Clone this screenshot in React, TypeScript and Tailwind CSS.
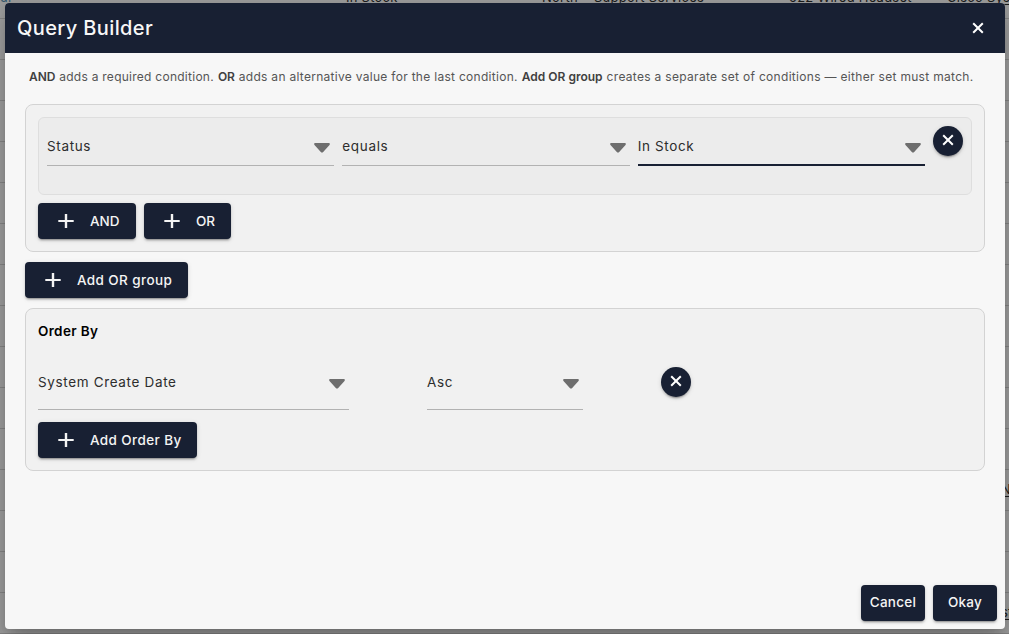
import React from 'react';
import clsx from 'clsx';

const CloseIcon: React.FC = () => (
  <svg width="12" height="12" viewBox="0 0 12 12" fill="none" stroke="currentColor" strokeWidth="2">
    <path d="M1.2 1.2L10.8 10.8M10.8 1.2L1.2 10.8" />
  </svg>
);

const PlusIcon: React.FC = () => (
  <svg width="16" height="14" viewBox="0 0 16 14" fill="currentColor" className="shrink-0">
    <path d="M6.8 0h2.4v6h6.5v2H9.2v6H6.8V8H.3V6h6.5z" />
  </svg>
);

const ArrowIcon: React.FC = () => (
  <svg width="16" height="10" viewBox="0 0 16 10" fill="#6e6e6e" className="shrink-0">
    <path d="M1.3 0h13.4c1.1 0 1.5 1.2.8 1.9L9.2 8.9c-.7.7-1.7.7-2.4 0L.5 1.9C-.2 1.2.2 0 1.3 0z" />
  </svg>
);

interface SelectFieldProps {
  value: string;
  active?: boolean;
  className?: string;
}

const SelectField: React.FC<SelectFieldProps> = ({ value, active, className }) => (
  <div
    className={clsx(
      'flex items-start justify-between pr-1',
      active ? 'border-b-2 border-[#182033]' : 'border-b border-[#b2b2b2]',
      className,
    )}
  >
    <span className="text-[13.5px] leading-[18px] tracking-[0.65px] text-[#2d2d2d]">{value}</span>
    <span className="pt-1.5">
      <ArrowIcon />
    </span>
  </div>
);

interface ActionButtonProps {
  label: string;
  icon?: boolean;
  className?: string;
}

const ActionButton: React.FC<ActionButtonProps> = ({ label, icon, className }) => (
  <button
    className={clsx(
      'flex h-9 items-center rounded bg-[#182033] text-[13.5px] font-medium whitespace-nowrap text-[#f4f4f4] shadow-[0_3px_1px_-2px_rgba(0,0,0,0.2),0_2px_2px_0_rgba(0,0,0,0.14),0_1px_5px_0_rgba(0,0,0,0.12)]',
      icon ? 'gap-4 pl-5' : 'justify-center pb-px',
      className,
    )}
  >
    {icon && <PlusIcon />}
    {label}
  </button>
);

const RemoveButton: React.FC = () => (
  <button className="flex size-[30px] shrink-0 items-center justify-center rounded-full bg-[#182033] pb-0.5 text-white shadow-[0_3px_1px_-2px_rgba(0,0,0,0.2),0_2px_2px_0_rgba(0,0,0,0.14),0_1px_5px_0_rgba(0,0,0,0.12)]">
    <CloseIcon />
  </button>
);

// Table rows sitting under the backdrop
const tableRows = [
  ['ur', 'In Stock', 'North', 'Support Services', '522 Wired Headset', 'Cisco Systems'],
  [], [], [], [], [], [], [], [], [], [], [],
  ['', '', '', '', '', 'N'],
  [], [],
  ['', '', '', '', '', 'st'],
];

const BackgroundTable: React.FC = () => (
  <div className="-mt-[22px]">
    {tableRows.map((row, i) => (
      <div
        key={i}
        className="grid h-[41px] grid-cols-[346px_196px_52px_195px_158px_62px] items-center border-b border-[#838383] text-[13px] tracking-[0.25px] whitespace-nowrap text-[#1c1c1c]"
      >
        {i === 0 && (
          <>
            <span className="text-[#33566b]">{row[0]}</span>
            <span>{row[1]}</span>
            <span>{row[2]}</span>
            <span>{row[3]}</span>
            <span>{row[4]}</span>
            <span className="underline underline-offset-2">{row[5]}</span>
          </>
        )}
        {i > 0 && row[5] && (
          <span className="col-start-6 pl-[54px] underline underline-offset-2">{row[5]}</span>
        )}
      </div>
    ))}
  </div>
);

export default function App() {
  return (
    <div className="relative h-[634px] w-[1009px] overflow-hidden bg-[#9b9b9b] font-['Inter',sans-serif]">
      <BackgroundTable />

      <div className="absolute top-[3px] left-[5px] flex h-[626px] w-[1000px] flex-col overflow-hidden rounded bg-[#f7f7f7] shadow-[0_11px_15px_-7px_rgba(0,0,0,0.2),0_24px_38px_3px_rgba(0,0,0,0.1),0_2px_8px_0_rgba(0,0,0,0.12)]">
        {/* Header */}
        <div className="flex h-[50px] shrink-0 items-center justify-between bg-[#182033] pr-[21px] pb-px pl-3 text-white">
          <h2 className="text-xl font-medium tracking-[0.38px] text-[#f7f7f7]">Query Builder</h2>
          <CloseIcon />
        </div>

        <div className="flex flex-1 flex-col px-5">
          <p className="flex h-[51px] items-center gap-1 pb-[3px] pl-1 text-xs whitespace-nowrap text-[#555555]">
            <b className="font-semibold tracking-[-0.1px] text-[#404040]">AND</b>
            <span className="tracking-[0.26px]">adds a required condition.</span>
            <b className="font-semibold tracking-[-0.1px] text-[#404040]">OR</b>
            <span className="tracking-[0.29px]">adds an alternative value for the last condition.</span>
            <b className="font-semibold text-[#404040]">Add OR group</b>
            <span className="tracking-[0.31px]">creates a separate set of conditions — either set must match.</span>
          </p>

          {/* Condition group */}
          <div className="rounded-lg border border-[#d3d3d3] bg-[#f1f1f1] p-3">
            <div className="flex h-[78px] gap-2 rounded-md border border-[#dedede] bg-[#ececec] px-2 pt-2">
              <SelectField value="Status" className="h-10 flex-1 pt-[11px]" />
              <SelectField value="equals" className="h-10 flex-1 pt-[11px]" />
              <SelectField value="In Stock" active className="h-10 flex-1 pt-[11px]" />
              <RemoveButton />
            </div>
            <div className="mt-2 flex gap-2">
              <ActionButton icon label="AND" className="w-[98px]" />
              <ActionButton icon label="OR" className="w-[87px]" />
            </div>
          </div>

          <ActionButton icon label="Add OR group" className="mt-2.5 w-[163px] shrink-0 tracking-[0.4px]" />

          {/* Order by */}
          <div className="mt-2.5 h-[163px] rounded-lg border border-[#d3d3d3] bg-[#f1f1f1] px-3 pt-3">
            <h3 className="text-[13.5px] leading-5 font-semibold tracking-[0.34px] text-black">Order By</h3>
            <div className="mt-[26px] flex">
              <SelectField value="System Create Date" className="h-[43px] w-[311px] pt-1.5" />
              <SelectField value="Asc" className="ml-[78px] h-[43px] w-[156px] pt-1.5" />
              <div className="ml-[78px]">
                <RemoveButton />
              </div>
            </div>
            <ActionButton icon label="Add Order By" className="mt-3 w-[159px] tracking-[0.4px]" />
          </div>
        </div>

        {/* Footer */}
        <div className="flex justify-end gap-2 p-2">
          <ActionButton label="Cancel" className="w-16 tracking-[0.3px]" />
          <ActionButton label="Okay" className="w-16 tracking-[0.2px]" />
        </div>
      </div>
    </div>
  );
}
